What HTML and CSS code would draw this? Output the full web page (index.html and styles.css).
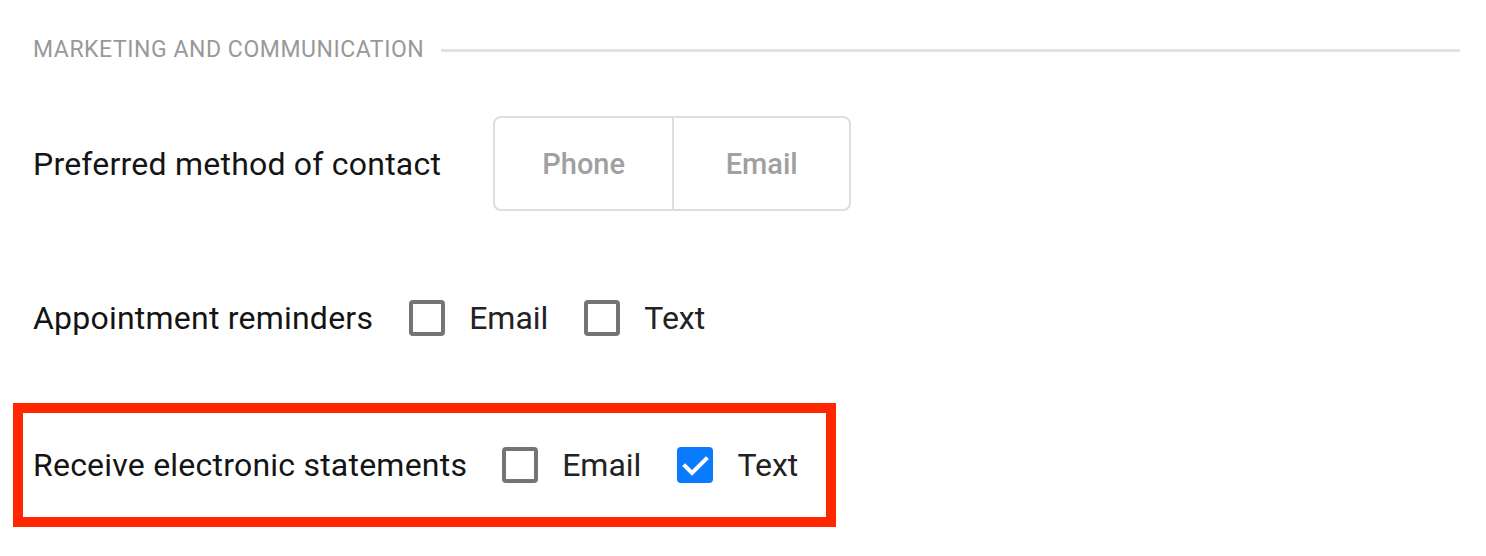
FILE: index.html
```html
<!DOCTYPE html>
<html lang="en">
<head>
<meta charset="utf-8">
<title>Marketing and communication</title>
<link rel="stylesheet" href="styles.css">
</head>
<body>
<main class="page">
  <div class="section-head">
    <span class="section-title">MARKETING AND COMMUNICATION</span>
    <span class="section-rule"></span>
  </div>

  <div class="row row-contact">
    <span class="label">Preferred method of contact</span>
    <div class="segmented">
      <button class="seg">Phone</button>
      <button class="seg seg-second">Email</button>
    </div>
  </div>

  <div class="row row-reminders">
    <span class="label">Appointment reminders</span>
    <label class="check"><span class="box"></span><span class="check-text">Email</span></label>
    <label class="check"><span class="box"></span><span class="check-text">Text</span></label>
  </div>

  <div class="highlight">
    <div class="row row-statements">
      <span class="label">Receive electronic statements</span>
      <label class="check"><span class="box"></span><span class="check-text">Email</span></label>
      <label class="check"><span class="box box-checked"><svg viewBox="0 0 36 36" width="36" height="36"><path d="M8 19 L15 26 L29 12" fill="none" stroke="#fff" stroke-width="4" stroke-linecap="square"/></svg></span><span class="check-text">Text</span></label>
    </div>
  </div>
</main>
</body>
</html>
```

FILE: styles.css
```css
html, body {
  margin: 0;
  padding: 0;
  background: #fff;
}
body {
  font-family: Roboto, "Liberation Sans", Arial, sans-serif;
  color: #1a1a1a;
}
.page {
  padding: 38px 26px 0 33px;
}
.section-head {
  display: flex;
  align-items: center;
  gap: 17px;
  height: 24px;
}
.section-title {
  font-size: 23px;
  line-height: 24px;
  color: #999;
  letter-spacing: 0.55px;
  white-space: nowrap;
}
.section-rule {
  flex: 1;
  height: 3px;
  background: #e2e2e2;
}
.row {
  display: flex;
  align-items: center;
}
.label {
  font-size: 32px;
  line-height: 36px;
  letter-spacing: 0.22px;
  color: #141414;
  white-space: nowrap;
}
.row-contact {
  margin-top: 54px;
}
.row-contact .label {
  margin-right: 52px;
}
.segmented {
  display: flex;
  border: 2px solid #dedede;
  border-radius: 8px;
  height: 91px;
}
.seg {
  width: 177px;
  border: 0;
  background: transparent;
  font-family: inherit;
  font-size: 29px;
  font-weight: 500;
  color: #a0a0a0;
  padding: 0;
}
.seg-second {
  border-left: 2px solid #dedede;
}
.row-reminders {
  margin-top: 89px;
  height: 36px;
}
.check {
  display: flex;
  align-items: center;
  margin-left: 36px;
}
.box {
  box-sizing: border-box;
  width: 36px;
  height: 36px;
  border: 4px solid #747474;
  border-radius: 4px;
  display: flex;
}
.box-checked {
  border: 0;
  background: #0a7bff;
}
.check-text {
  font-size: 32px;
  line-height: 36px;
  color: #222;
  margin-left: 24px;
}
.highlight {
  display: inline-flex;
  margin-top: 67px;
  margin-left: -20px;
  border: 10px solid #ff2700;
  padding: 0 28px 0 10px;
  height: 104px;
  align-items: center;
}
.row-statements .check:first-of-type {
  margin-left: 35px;
}
```
